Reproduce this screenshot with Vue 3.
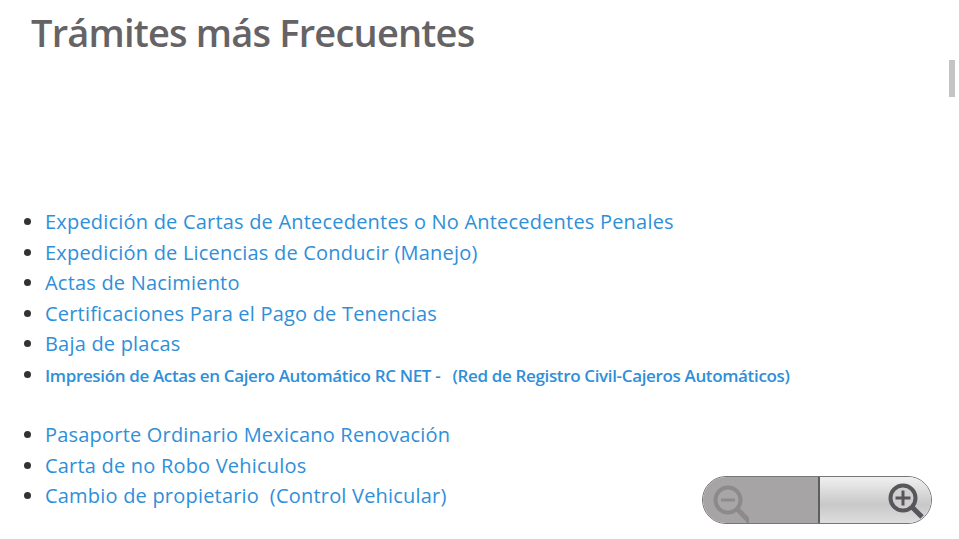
<script setup>
const items = [
  { text: 'Expedición de Cartas de Antecedentes o No Antecedentes Penales' },
  { text: 'Expedición de Licencias de Conducir (Manejo)' },
  { text: 'Actas de Nacimiento' },
  { text: 'Certificaciones Para el Pago de Tenencias' },
  { text: 'Baja de placas' },
  { text: 'Impresión de Actas en Cajero Automático RC NET -\u00a0\u00a0 (Red de Registro Civil-Cajeros Automáticos)', small: true },
  { text: 'Pasaporte Ordinario Mexicano Renovación' },
  { text: 'Carta de no Robo Vehiculos' },
  { text: 'Cambio de propietario\u00a0 (Control Vehicular)' }
]
</script>

<template>
  <div class="page">
    <h1 class="title">Trámites más Frecuentes</h1>
    <ul class="list">
      <li v-for="item in items" :key="item.text" :class="{ small: item.small }">
        <a href="#" @click.prevent>{{ item.text }}</a>
      </li>
    </ul>
    <div class="scrollbar"></div>
    <div class="zoom">
      <div class="zoom-btn zoom-out">
        <svg width="46" height="46" viewBox="0 0 46 46">
          <g fill="none" stroke="#8c8a8b">
            <circle cx="25" cy="23" r="12.5" stroke-width="4" fill="#a9a6a8" />
            <path d="M34 32 L49 47" stroke-width="5" />
            <path d="M18 23 H32" stroke-width="3" />
          </g>
        </svg>
      </div>
      <div class="zoom-btn zoom-in">
        <svg width="46" height="46" viewBox="0 0 46 46">
          <g fill="none" stroke="#58565a">
            <circle cx="21" cy="21" r="12.5" stroke-width="4" fill="#cfcfd0" />
            <path d="M30 30 L40 40" stroke-width="5" />
            <path d="M13.5 21 H28.5 M21 13.5 V28.5" stroke-width="3" />
          </g>
        </svg>
      </div>
    </div>
  </div>
</template>

<style scoped>
.page {
  position: relative;
  width: 959px;
  height: 539px;
  overflow: hidden;
  background: #fff;
  font-family: "Open Sans", "Noto Sans", sans-serif;
}
.title {
  margin: 0;
  padding: 7px 0 0 31px;
  font-size: 38px;
  line-height: 50px;
  font-weight: 600;
  color: #656366;
  letter-spacing: -0.8px;
}
.list {
  margin: 150px 0 0;
  padding: 0 0 0 45px;
  color: #333;
  font-size: 20px;
}
.list li {
  height: 30.6px;
  line-height: 30.6px;
}
.list li.small {
  height: 60px;
  line-height: 30.6px;
}
.list li a {
  color: #2f8fd8;
  text-decoration: none;
  letter-spacing: 0.2px;
}
.list li.small a {
  font-size: 17px;
  font-weight: 600;
  letter-spacing: -0.35px;
}
.scrollbar {
  position: absolute;
  left: 949px;
  top: 60px;
  width: 6px;
  height: 37px;
  background: #c4c4c4;
}
.zoom {
  position: absolute;
  left: 702px;
  top: 476px;
  width: 230px;
  height: 48px;
  display: flex;
  border-radius: 24px;
  overflow: hidden;
  border: 1px solid #77757a;
  box-sizing: border-box;
}
.zoom-btn {
  height: 100%;
  display: flex;
  align-items: center;
}
.zoom-out {
  width: 115px;
  background: #a7a4a6;
  border-right: 2px solid #5f5d60;
}
.zoom-in {
  flex: 1;
  justify-content: flex-end;
  background: linear-gradient(#f0f0f0, #c8c8c9 60%, #dedede);
  padding-right: 3px;
}
</style>
